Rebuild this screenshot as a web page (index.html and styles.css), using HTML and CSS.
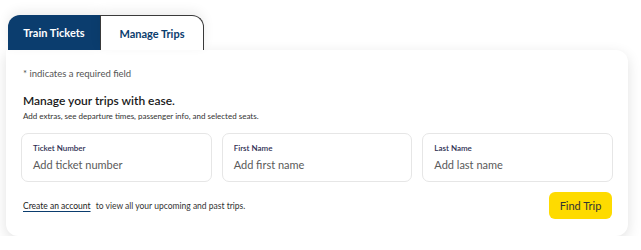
FILE: index.html
```html
<!DOCTYPE html>
<html>
<head>
<meta charset="utf-8">
<link rel="stylesheet" href="styles.css">
</head>
<body>
<div class="wrap">
  <div class="tabs">
    <div class="tab tab-active">Train Tickets</div>
    <div class="tab tab-idle">Manage Trips</div>
  </div>
  <div class="card">
    <p class="req">* indicates a required field</p>
    <h2 class="title">Manage your trips with ease.</h2>
    <p class="sub">Add extras, see departure times, passenger info, and selected seats.</p>
    <div class="fields">
      <label class="field">
        <span class="flabel">Ticket Number</span>
        <span class="ph">Add ticket number</span>
      </label>
      <label class="field">
        <span class="flabel">First Name</span>
        <span class="ph">Add first name</span>
      </label>
      <label class="field">
        <span class="flabel">Last Name</span>
        <span class="ph">Add last name</span>
      </label>
    </div>
    <div class="foot">
      <p class="note"><a class="link" href="#">Create an account</a> to view all your upcoming and past trips.</p>
      <button class="btn">Find Trip</button>
    </div>
  </div>
</div>
</body>
</html>
```
FILE: styles.css
```css
html, body { margin: 0; padding: 0; background: #fff; }
body { font-family: "Lato", "DejaVu Sans", sans-serif; color: #222; }
.wrap { padding: 15px 13px 0 6px; width: 622px; }
.tabs { display: flex; padding-left: 2px; height: 35px; }
.tab {
  box-sizing: border-box; height: 35px; display: flex; align-items: center; justify-content: center;
  font-size: 11px; font-weight: 700; box-shadow: 0 -4px 12px rgba(0,0,0,0.07);
}
.tab-active { width: 92px; background: #0b3d6e; color: #fff; border-top-left-radius: 12px; }
.tab-idle {
  width: 104px; background: #fff; color: #0b3d6e; border: 1.5px solid #3a3a3a; border-bottom: none;
  border-top-right-radius: 12px; font-weight: 700;
}
.card {
  background: #fff; border-radius: 0 12px 12px 12px; padding: 17px 15px 17px 15px;
  box-shadow: 0 4px 14px rgba(0,0,0,0.12);
}
.req { margin: 0 0 0 2px; font-size: 9.5px; color: #555; line-height: 14px; }
.title { margin: 12px 0 0 2px; font-size: 12px; font-weight: 600; line-height: 16px; color: #1a1a1a; }
.sub { margin: 1.5px 0 0 2px; font-size: 8px; color: #333; line-height: 11px; }
.fields { display: grid; grid-template-columns: 1fr 1fr 1fr; gap: 10px; margin-top: 11.5px; }
.field {
  box-sizing: border-box; height: 49px; border: 1px solid #e6e6e6; border-radius: 7px;
  padding: 9px 11px 0; display: flex; flex-direction: column;
}
.flabel { font-size: 8px; color: #2e2e52; line-height: 11px; font-weight: 600; }
.ph { font-size: 11px; color: #5a5a5a; line-height: 15px; margin-top: 3px; }
.foot { display: flex; justify-content: space-between; align-items: center; margin-top: 10px; }
.note { margin: 0 0 0 2px; font-size: 8.5px; color: #333; }
.link { color: #222; text-decoration: underline; text-decoration-color: #0b3d6e; text-underline-offset: 2px; margin-right: 3px; }
.btn {
  font-family: inherit; border: none; background: #fedb00; color: #333; font-size: 11px;
  width: 63px; height: 27px; border-radius: 6px; padding: 0; margin-right: 1px;
}
```
